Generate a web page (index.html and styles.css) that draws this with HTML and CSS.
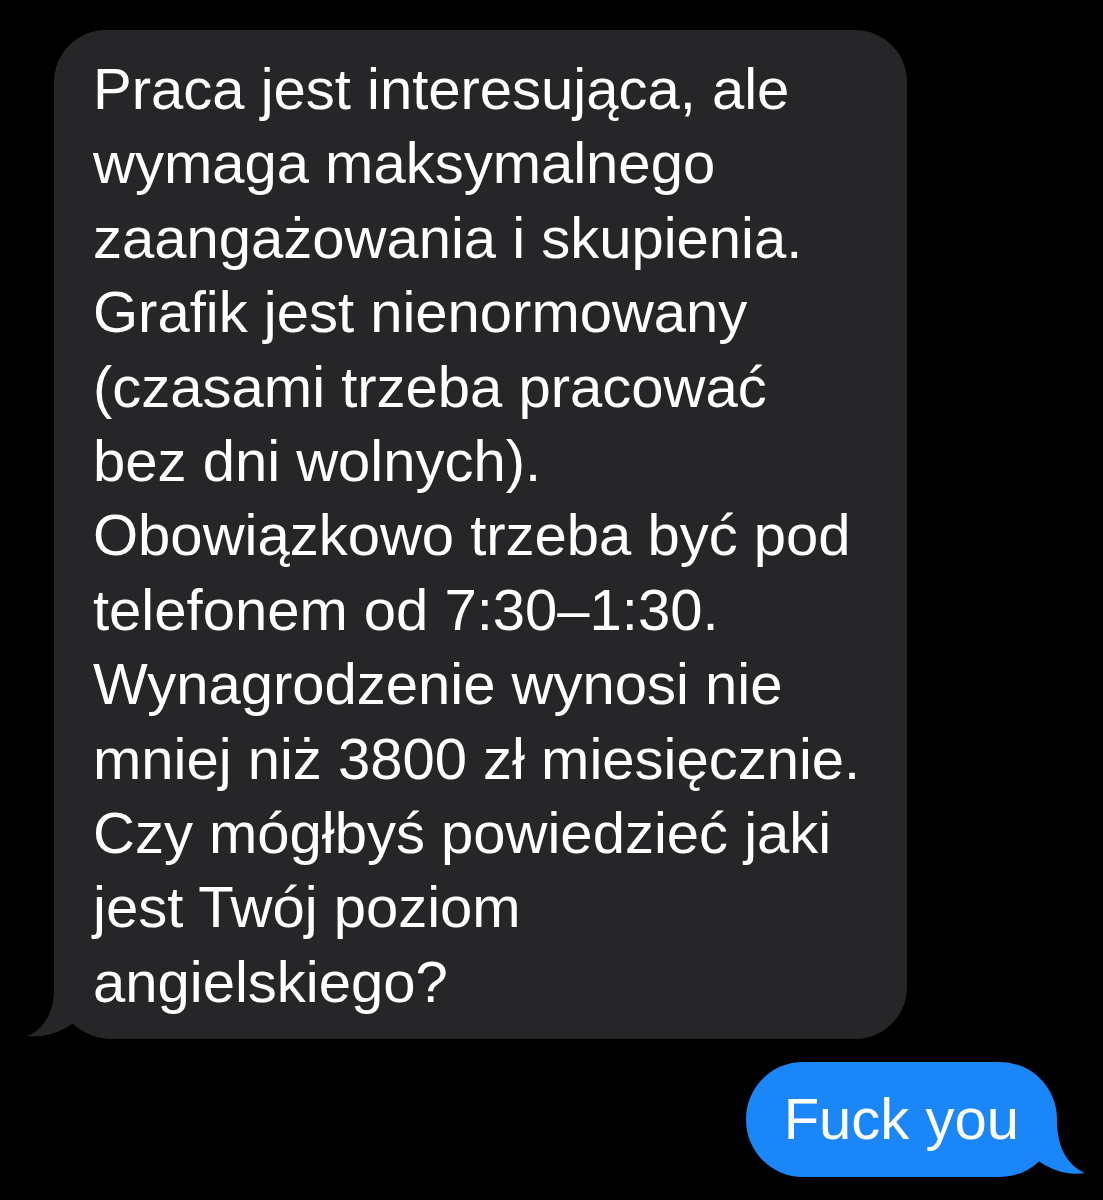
FILE: index.html
```html
<!DOCTYPE html>
<html lang="pl">
<head>
<meta charset="utf-8">
<title>Wiadomości</title>
<link rel="stylesheet" href="styles.css">
</head>
<body>
<main class="thread">
  <div class="bubble incoming">
    <p class="msg">Praca jest interesująca, ale<br>wymaga maksymalnego<br>zaangażowania i skupienia.<br>Grafik jest nienormowany<br>(czasami trzeba pracować<br>bez dni wolnych).<br>Obowiązkowo trzeba być pod<br>telefonem od 7:30–1:30.<br>Wynagrodzenie wynosi nie<br>mniej niż 3800 zł miesięcznie.<br>Czy mógłbyś powiedzieć jaki<br>jest Twój poziom<br>angielskiego?</p>
    <svg class="tail tail-in" width="100" height="70" viewBox="0 0 100 70" aria-hidden="true">
      <path d="M30 0 L30 20 C30 45 18 62 3 67 C20 69 37 63 48 55 L60 40 L60 0 Z"/>
    </svg>
  </div>
  <div class="bubble outgoing">
    <p class="msg">Fuck you</p>
    <svg class="tail tail-out" width="90" height="70" viewBox="0 0 90 70" aria-hidden="true">
      <path d="M50 0 L60 13 C60 40 70 58 88 66 C70 69 55 63 43 55 L30 30 L30 0 Z"/>
    </svg>
  </div>
</main>
</body>
</html>
```
FILE: styles.css
```css
html, body {
  margin: 0;
  padding: 0;
  background: #000;
}

body {
  font-family: "Liberation Sans", Arial, sans-serif;
  color: #fff;
}

.thread {
  display: flex;
  flex-direction: column;
  padding-top: 30px;
}

.bubble {
  position: relative;
  box-sizing: border-box;
}

.msg {
  margin: 0;
  font-size: 58px;
  line-height: 74.4px;
  position: relative;
  z-index: 1;
}

.incoming {
  align-self: flex-start;
  margin-left: 54px;
  width: 853px;
  padding: 22px 30px 20px 39px;
  background: #262629;
  border-radius: 52px 52px 52px 58px;
}

.outgoing {
  align-self: flex-end;
  margin-top: 23px;
  margin-right: 46px;
  padding: 20px 38px 20px 38px;
  background: #1b86f8;
  border-radius: 57px;
}

.tail {
  position: absolute;
  bottom: 0;
  display: block;
}

.tail-in {
  left: -30px;
  fill: #262629;
}

.tail-out {
  right: -30px;
  fill: #1b86f8;
}
```
